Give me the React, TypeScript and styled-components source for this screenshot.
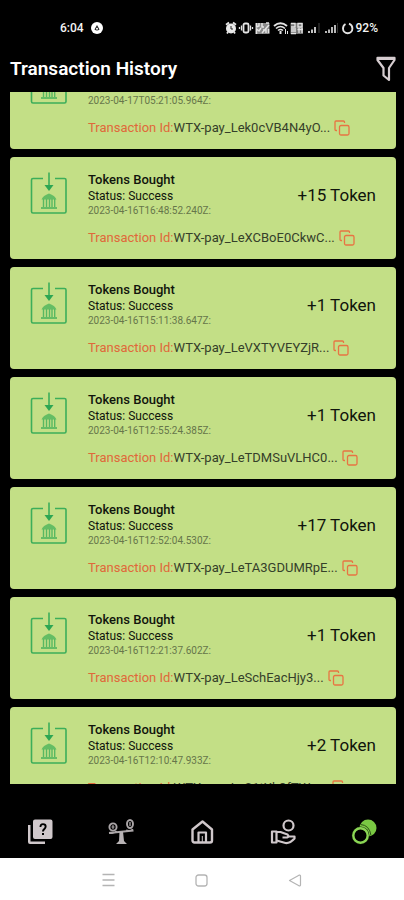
import React, { useLayoutEffect, useRef } from "react";
import styled, { createGlobalStyle } from "styled-components";

const GlobalStyle = createGlobalStyle`
  * { box-sizing: border-box; }
  body {
    margin: 0;
    background: #000;
    font-family: Roboto, "Liberation Sans", sans-serif;
  }
  button { font: inherit; color: inherit; border: 0; padding: 0; background: none; cursor: pointer; }
`;

const Screen = styled.div`
  display: flex;
  flex-direction: column;
  height: 100vh;
  background: #000;
`;

const StatusBar = styled.div`
  display: flex;
  align-items: center;
  justify-content: space-between;
  flex: none;
  height: 46px;
  padding: 10px 26px 0 60px;
  color: #f4f4f4;
  font-size: 12px;
  font-weight: 500;
`;

const StatusGroup = styled.div<{ $gap: number }>`
  display: flex;
  align-items: center;
  gap: ${(p) => p.$gap}px;
`;

const Header = styled.header`
  display: flex;
  align-items: center;
  justify-content: space-between;
  flex: none;
  height: 46px;
  padding: 0 8px 0 10px;
`;

const Title = styled.h1`
  margin: 0;
  color: #fff;
  font-size: 19px;
  font-weight: 600;
  line-height: 24px;
`;

const IconButton = styled.button`
  display: flex;
  flex: none;
`;

const List = styled.main`
  flex: 1;
  min-height: 0;
  margin: 0 8px 0 10px;
  overflow-y: auto;
  scrollbar-width: none;
`;

const Card = styled.article`
  display: flex;
  align-items: flex-start;
  gap: 20px;
  height: 102px;
  margin-bottom: 8px;
  padding: 14px 20px 0;
  border-radius: 4px;
  background: #c3df86;
  color: #10140c;
`;

const Body = styled.div`
  flex: 1;
  min-width: 0;
`;

const Top = styled.div`
  display: flex;
  align-items: center;
  justify-content: space-between;
`;

const Name = styled.h2`
  margin: 0;
  font-size: 13px;
  font-weight: 500;
  line-height: 18px;
`;

const Status = styled.p`
  margin: 0;
  font-size: 12px;
  font-weight: 400;
  line-height: 15px;
`;

const Time = styled.time`
  display: block;
  color: #66764a;
  font-size: 10px;
  line-height: 14px;
`;

const Amount = styled.strong`
  font-size: 17px;
  font-weight: 400;
  line-height: 20px;
`;

const Reference = styled.div`
  display: flex;
  align-items: center;
  gap: 4px;
  margin-top: 11px;
  font-size: 13px;
  line-height: 18px;
  color: #35402a;
`;

const Label = styled.span`
  color: #e0693a;
`;

const TabBar = styled.nav`
  display: flex;
  align-items: center;
  flex: none;
  height: 74px;
  padding-top: 22px;
`;

const Tab = styled.button<{ $active?: boolean }>`
  display: flex;
  flex: 1;
  justify-content: center;
  color: ${(p) => (p.$active ? "#7ac943" : "#d0c8cb")};
`;

const SystemBar = styled.div`
  display: flex;
  align-items: center;
  justify-content: space-between;
  flex: none;
  height: 42px;
  padding: 2px 102px 0;
  background: #fff;
  color: #b4b4b4;
`;

type Transaction = { time: string; id: string; amount: number };

const transactions: Transaction[] = [
  { time: "2023-04-17T05:21:05.964Z", id: "WTX-pay_Lek0cVB4N4yO...", amount: 1 },
  { time: "2023-04-16T16:48:52.240Z", id: "WTX-pay_LeXCBoE0CkwC...", amount: 15 },
  { time: "2023-04-16T15:11:38.647Z", id: "WTX-pay_LeVXTYVEYZjR...", amount: 1 },
  { time: "2023-04-16T12:55:24.385Z", id: "WTX-pay_LeTDMSuVLHC0...", amount: 1 },
  { time: "2023-04-16T12:52:04.530Z", id: "WTX-pay_LeTA3GDUMRpE...", amount: 17 },
  { time: "2023-04-16T12:21:37.602Z", id: "WTX-pay_LeSchEacHjy3...", amount: 1 },
  { time: "2023-04-16T12:10:47.933Z", id: "WTX-pay_LeS1tXh8fTWn...", amount: 2 },
];

const DepositIcon = () => (
  <svg width="38" height="44" viewBox="0 0 38 44" fill="none" stroke="#3cae5a" strokeWidth="1.6" aria-hidden="true">
    <path d="M13 7.500H3Q1.500 7.500 1.500 9V40.500Q1.500 42 3 42H34.500Q36 42 36 40.500V9Q36 7.500 34.500 7.500H25" />
    <path d="M19 1.500V16" />
    <path d="M14.500 14H23.500L19 20Z" fill="#2da653" stroke="none" />
    <path d="M11.500 28.500Q13 24.500 19 22.500Q25 24.500 26.500 28.500Z" fill="#64bd64" stroke="none" />
    <path d="M13.500 28V36M16.500 28V36M19.500 28V36M22 28V36M24.700 28V36" stroke="#58b862" strokeWidth="1.400" />
    <path d="M11 37H27" strokeWidth="2" stroke="#64bd64" />
  </svg>
);

const CopyIcon = () => (
  <svg width="16" height="16" viewBox="0 0 16 16" fill="none" stroke="#e87443" strokeWidth="1.300" aria-hidden="true">
    <rect x="5.500" y="5.500" width="9.500" height="9.500" rx="1.500" />
    <path d="M10.500 3V2Q10.500 1 9.500 1H2Q1 1 1 2V9.500Q1 10.500 2 10.500H3" />
  </svg>
);

const FilterIcon = () => (
  <svg width="20" height="26" viewBox="0 0 20 26" fill="none" stroke="#d6cdd0" strokeWidth="2.200" strokeLinejoin="round" aria-hidden="true">
    <path d="M1.500 1.800H18.500V4L13 12V24L7.500 19.500V12L1.500 4Z" />
    <path d="M2 3.500H18" strokeWidth="1" />
  </svg>
);

const AppDot = () => (
  <svg width="12" height="12" viewBox="0 0 12 12" aria-hidden="true">
    <circle cx="6" cy="6" r="6" fill="#fff" />
    <path d="M6 3L8.500 7.500Q6 9.500 3.500 7.500Z" fill="#222" />
    <circle cx="6" cy="6.800" r="1" fill="#fff" />
  </svg>
);

const StatusIcons = () => (
  <svg width="129" height="14" viewBox="0 0 129 14" fill="none" stroke="#e4e4e4" aria-hidden="true">
    <circle cx="6" cy="7.500" r="5" fill="#e8e8e8" stroke="none" />
    <path d="M1 3.800L4 1.500M11 3.800L8 1.500M3 11L2 12.500M9 11L10 12.500" strokeWidth="1.800" />
    <path d="M6 5V8L8 8" stroke="#222" />
    <rect x="18.500" y="2.500" width="5" height="9" rx="1.500" strokeWidth="1.800" />
    <path d="M16.500 4.500V9.500M25.500 4.500V9.500M14.500 6V8M27.500 6V8" strokeWidth="1.300" />
    <rect x="30.500" y="2" width="14" height="11" fill="#8a8a8a" stroke="none" />
    <path d="M31.500 2V6L34 5V2M37 2V6H39M41 2H44M31.500 13V8L34 10L36 7M37 12L44 4M38 9H41V12M43.500 8V12" strokeWidth="1.500" />
    <path d="M49 5Q55.500 -.5 62 5" strokeWidth="2" />
    <path d="M51 7.500Q55.500 3.500 60 7.500M53 9.500Q55.500 7.500 58 9.500" strokeWidth="1.600" />
    <path d="M55.500 10V13" strokeWidth="2" />
    <path d="M60.500 8V13M62.500 10V13" />
    <rect x="65.500" y="2" width="12.500" height="11" fill="#777" stroke="none" />
    <path d="M66 2.500H70V6H66M73 2.500H77V6H73ZM66 8H71M66 10H71M66 12.500H71M74 7V12M77 7V12M72.500 8.500H78" strokeWidth="1.300" />
    <path d="M84 10V12M87 8.500V12M90 6V12" strokeWidth="1.700" />
    <path d="M94 2V12" stroke="#444" />
    <path d="M101 10V12M104 8.500V12M107 6V12M110 4V12" strokeWidth="1.600" />
    <path d="M112.500 2V12" stroke="#333" />
    <path d="M120.500 3Q118 4.500 118 7.500A4.700 4.700 0 0 0 127.400 7.500Q127.400 4 124 2.700" strokeWidth="1.900" />
  </svg>
);

const QuizIcon = () => (
  <svg width="26" height="26" viewBox="0 0 26 26" fill="currentColor" aria-hidden="true">
    <path d="M1 6H3.500V22.500H18V25H3Q1 25 1 23Z" />
    <path fillRule="evenodd" d="M8 .5H23.500Q25.500 .5 25.500 2.500V18Q25.500 20 23.500 20H8Q6 20 6 18V2.500Q6 .5 8 .5ZM12.500 8H14.300Q14.300 6 16 6Q17.700 6 17.700 7.500Q17.700 8.500 16.500 9.600Q15 10.800 15 12.500H17Q17 11.500 18.200 10.400Q19.600 9 19.600 7.500Q19.600 4.200 16 4.200Q12.500 4.200 12.500 8ZM15 14H17V16H15Z" />
  </svg>
);

const BalanceIcon = () => (
  <svg width="26" height="26" viewBox="0 0 26 26" fill="none" stroke="#aaa5a7" strokeWidth="1.900" aria-hidden="true">
    <circle cx="5" cy="8" r="3.600" />
    <path d="M5 6V10M3.500 8H6.500" strokeWidth="1.100" />
    <ellipse cx="22" cy="5" rx="3" ry="4" />
    <path d="M22 3V7" strokeWidth="1.300" />
    <path d="M1 14L25.500 11.500M1.500 13.500Q5 15 9 12.500M18 11.500Q22 13 25 10.500" />
    <path d="M11.500 12.500H15L16 22L19 25H8L11 22Z" fill="#b8b3b5" stroke="none" />
  </svg>
);

const HomeIcon = () => (
  <svg width="24" height="26" viewBox="0 0 24 26" fill="none" stroke="currentColor" strokeWidth="2.400" strokeLinejoin="round" aria-hidden="true">
    <path d="M2.500 10.500L12.500 2.500L22 10.500V21.500Q22 23.500 20 23.500H4.500Q2.500 23.500 2.500 21.500Z" />
    <path d="M8.500 23V13.500H16V23" strokeWidth="2.200" />
    <path d="M12.300 17V23" strokeWidth="1" />
  </svg>
);

const HandCoinIcon = () => (
  <svg width="26" height="26" viewBox="0 0 26 26" fill="none" stroke="currentColor" strokeWidth="2.200" strokeLinejoin="round" aria-hidden="true">
    <circle cx="18.500" cy="6.500" r="5" />
    <path d="M2 12.500H6.500V23.500H2Z" />
    <path d="M6.500 13H10.500L17.500 15.500Q19.500 17.500 17 18.500H12.500M18.500 17.500H24.500V19.500Q20 24.500 15.500 24L6.500 21.500" />
  </svg>
);

const TokensIcon = () => (
  <svg width="26" height="26" viewBox="0 0 26 26" aria-hidden="true">
    <circle cx="17" cy="9" r="8.500" fill="#7ac943" />
    <path d="M9.500 5.500Q18.500 6 20 16.500" fill="none" stroke="#2b5215" />
    <circle cx="9.500" cy="16.500" r="8.900" fill="#111c08" />
    <circle cx="9.500" cy="16.500" r="7.200" fill="#000" stroke="#8bd655" strokeWidth="2.400" />
  </svg>
);

const MenuGlyph = () => (
  <svg width="13" height="14" viewBox="0 0 13 14" stroke="currentColor" aria-hidden="true">
    <path d="M.5 1.500H12.500M.5 7H12.500M.5 12.500H12.500" strokeWidth="1.300" />
  </svg>
);

const SquareGlyph = () => (
  <svg width="13" height="13" viewBox="0 0 13 13" fill="none" stroke="currentColor" aria-hidden="true">
    <rect x="1" y="1" width="11" height="11" rx="2.500" strokeWidth="1.300" />
  </svg>
);

const BackGlyph = () => (
  <svg width="14" height="13" viewBox="0 0 14 13" fill="none" stroke="currentColor" strokeLinejoin="round" aria-hidden="true">
    <path d="M1.500 6.500L11 1.200Q12.500 .8 12.500 2V11Q12.500 12.200 11 11.800Z" strokeWidth="1.200" />
  </svg>
);

function TransactionCard({ time, id, amount }: Transaction) {
  return (
    <Card>
      <DepositIcon />
      <Body>
        <Top>
          <div>
            <Name>Tokens Bought</Name>
            <Status>Status: Success</Status>
            <Time dateTime={time}>{time}:</Time>
          </div>
          <Amount>+{amount} Token</Amount>
        </Top>
        <Reference>
          <span>
            <Label>Transaction Id:</Label>
            {id}
          </span>
          <IconButton aria-label="Copy transaction id">
            <CopyIcon />
          </IconButton>
        </Reference>
      </Body>
    </Card>
  );
}

export default function App() {
  const list = useRef<HTMLElement>(null);

  useLayoutEffect(() => {
    if (list.current) list.current.scrollTop = 45;
  }, []);

  return (
    <Screen>
      <GlobalStyle />
      <StatusBar>
        <StatusGroup $gap={7}>
          <span>6:04</span>
          <AppDot />
        </StatusGroup>
        <StatusGroup $gap={2}>
          <StatusIcons />
          <span>92%</span>
        </StatusGroup>
      </StatusBar>
      <Header>
        <Title>Transaction History</Title>
        <IconButton aria-label="Filter">
          <FilterIcon />
        </IconButton>
      </Header>
      <List ref={list}>
        {transactions.map((t) => (
          <TransactionCard key={t.time} {...t} />
        ))}
      </List>
      <TabBar>
        <Tab aria-label="Questions"><QuizIcon /></Tab>
        <Tab aria-label="Balance"><BalanceIcon /></Tab>
        <Tab aria-label="Home"><HomeIcon /></Tab>
        <Tab aria-label="Payments"><HandCoinIcon /></Tab>
        <Tab aria-label="Tokens" aria-current="page" $active><TokensIcon /></Tab>
      </TabBar>
      <SystemBar>
        <IconButton aria-label="Recent apps"><MenuGlyph /></IconButton>
        <IconButton aria-label="Home screen"><SquareGlyph /></IconButton>
        <IconButton aria-label="Back"><BackGlyph /></IconButton>
      </SystemBar>
    </Screen>
  );
}
